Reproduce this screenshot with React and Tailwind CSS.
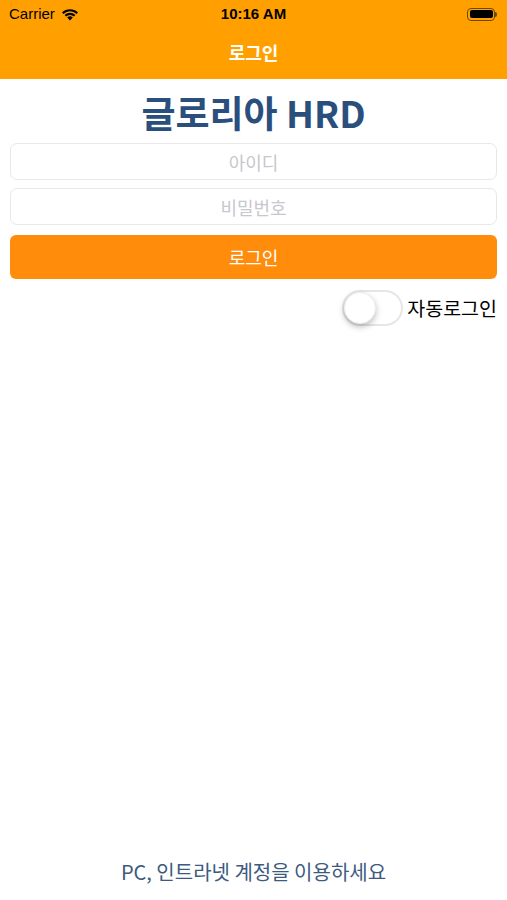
const font = {
  fontFamily: '"Noto Sans CJK KR", "Noto Sans", sans-serif',
};

const Wifi = () => (
  <svg width="18" height="13" viewBox="0 0 18 13">
    <path d="M9 12.5 L6.2 9.6 A4 4 0 0 1 11.8 9.6 Z" fill="#000" />
    <path d="M3.6 7.1 A7.6 7.6 0 0 1 14.4 7.1 L12.9 8.6 A5.5 5.5 0 0 0 5.1 8.6 Z" fill="#000" />
    <path d="M1 4.5 A11.3 11.3 0 0 1 17 4.5 L15.5 6 A9.2 9.2 0 0 0 2.5 6 Z" fill="#000" />
  </svg>
);

const Battery = () => (
  <div className="flex items-center">
    <div className="w-[28px] h-[13px] rounded-[4px] border border-[#6b4a00] p-[1.5px]">
      <div className="w-full h-full rounded-[2px] bg-black" />
    </div>
    <div className="w-[2px] h-[5px] rounded-r bg-[#6b4a00]" />
  </div>
);

export default function App() {
  return (
    <div className="w-[507px] h-[900px] bg-white flex flex-col" style={font}>
      <div className="bg-[#ffa000] h-[79px] flex flex-col">
        <div className="h-[28px] flex items-center justify-between px-[9px]">
          <div className="flex items-center gap-[6px] w-[120px]">
            <span className="text-[15px] text-black" style={{ fontFamily: '"Liberation Sans", sans-serif' }}>Carrier</span>
            <Wifi />
          </div>
          <span className="text-[15px] font-bold text-black" style={{ fontFamily: '"Liberation Sans", sans-serif' }}>10:16 AM</span>
          <div className="w-[120px] flex justify-end pr-[1px]">
            <Battery />
          </div>
        </div>
        <div className="flex-1 flex items-center justify-center pb-[2px]">
          <span className="text-[18px] font-bold text-white">로그인</span>
        </div>
      </div>

      <div className="px-[10px] flex flex-col">
        <h1 className="text-center text-[37px] font-bold text-[#2b4f7c] leading-[44px] mt-[11px] mb-[9px]">
          글로리아 HRD
        </h1>
        <input
          placeholder="아이디"
          className="h-[37px] rounded-[7px] border border-[#e8e8e8] text-center text-[18px] placeholder:text-[#c7c7cd] outline-none"
          style={font}
        />
        <input
          placeholder="비밀번호"
          className="h-[37px] mt-[8px] rounded-[7px] border border-[#e8e8e8] text-center text-[18px] placeholder:text-[#c7c7cd] outline-none"
          style={font}
        />
        <button className="h-[44px] mt-[10px] rounded-[6px] bg-[#ff8c0b] text-white text-[18px]" style={font}>
          로그인
        </button>
        <div className="flex justify-end items-center gap-[4px] mt-[11px]">
          <div className="w-[61px] h-[36px] rounded-full border-[2px] border-[#e6e6e6] bg-white relative">
            <div className="absolute left-0 top-0 w-[32px] h-[32px] rounded-full bg-white shadow-[0_3px_6px_rgba(0,0,0,0.25)] border border-[#ececec]" />
          </div>
          <span className="text-[19.5px] text-black">자동로그인</span>
        </div>
      </div>

      <div className="flex-1" />
      <div className="text-center text-[20px] text-[#3d5a80] pb-[13px]">
        PC, 인트라넷 계정을 이용하세요
      </div>
    </div>
  );
}
